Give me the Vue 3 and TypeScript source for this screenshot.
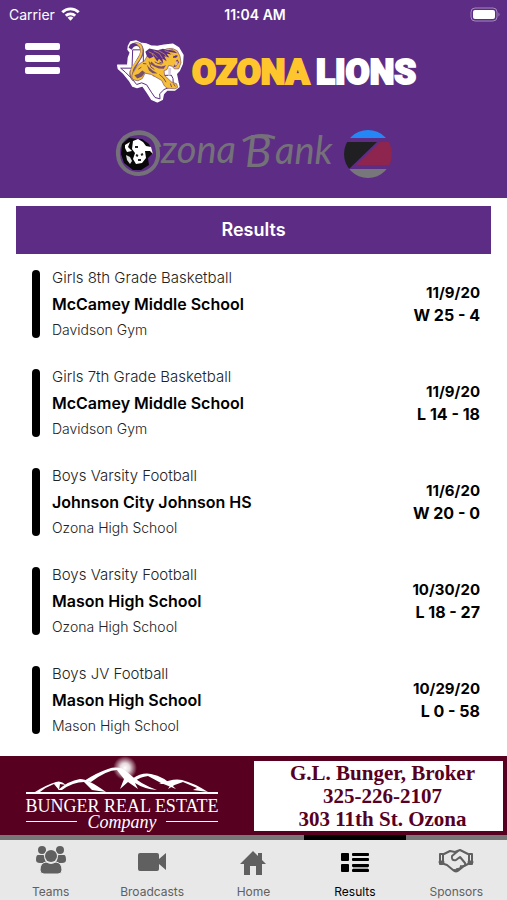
<script setup lang="ts">
interface GameResult {
  team: string
  opponent: string
  venue: string
  date: string
  score: string
}

type TabIcon = 'teams' | 'video' | 'home' | 'list' | 'handshake'

interface Tab {
  label: string
  icon: TabIcon
  active?: boolean
}

const results: GameResult[] = [
  { team: 'Girls 8th Grade Basketball', opponent: 'McCamey Middle School', venue: 'Davidson Gym', date: '11/9/20', score: 'W 25 - 4' },
  { team: 'Girls 7th Grade Basketball', opponent: 'McCamey Middle School', venue: 'Davidson Gym', date: '11/9/20', score: 'L 14 - 18' },
  { team: 'Boys Varsity Football', opponent: 'Johnson City Johnson HS', venue: 'Ozona High School', date: '11/6/20', score: 'W 20 - 0' },
  { team: 'Boys Varsity Football', opponent: 'Mason High School', venue: 'Ozona High School', date: '10/30/20', score: 'L 18 - 27' },
  { team: 'Boys JV Football', opponent: 'Mason High School', venue: 'Mason High School', date: '10/29/20', score: 'L 0 - 58' },
]

const tabs: Tab[] = [
  { label: 'Teams', icon: 'teams' },
  { label: 'Broadcasts', icon: 'video' },
  { label: 'Home', icon: 'home' },
  { label: 'Results', icon: 'list', active: true },
  { label: 'Sponsors', icon: 'handshake' },
]
</script>

<template>
  <div class="app">
    <header class="top">
      <div class="status">
        <div class="carrier">
          <span>Carrier</span>
          <svg class="wifi" viewBox="0 0 20 15" aria-hidden="true">
            <g fill="none" stroke="#fff" stroke-width="3">
              <path d="M1.2 5.6a12.4 12.4 0 0 1 17.6 0" />
              <path d="M5 9.4a7 7 0 0 1 10 0" />
            </g>
            <path d="M6.900 11.500a4.300 4.300 0 0 1 6.200 0L10 14.600z" fill="#fff" />
          </svg>
        </div>
        <time class="clock">11:04 AM</time>
        <div class="power">
          <svg class="battery" viewBox="0 0 31 15" aria-hidden="true">
            <rect x="1" y="1" width="26" height="13" rx="4" fill="none" stroke="#a588bd" />
            <rect x="3" y="3" width="22" height="9" rx="2" fill="#fff" />
            <path d="M28.500 5.500q2 2 0 4z" fill="#a588bd" />
          </svg>
        </div>
      </div>

      <div class="brand-row">
        <button class="menu" type="button" aria-label="Menu">
          <span></span><span></span><span></span>
        </button>
        <div class="brand">
          <svg class="lion" viewBox="6 10 216 194" aria-hidden="true">
            <path d="M43 31L50 18L66 15L80 22L96 24L110 30L130 32L150 28L176 25L194 36L207 58L205 84L196 104L187 114L192 140L195 153L182 163L160 162L148 175L145 191L130 198L113 191L101 172L86 150L69 155L56 151L46 134L29 113L13 99L11 88L41 88L43 66L49 50L42 41Z" fill="#fff" stroke="#fff" stroke-width="4" stroke-linejoin="round" />
            <path d="M56 42H88V90H118V120L172 118L177 128L178 150L150 161L137 174L138 189L123 185L112 169L98 147L83 141L68 146L54 129L34 109L20 97H54Z" fill="#fff" stroke="#5c2d87" stroke-width="3" stroke-linejoin="round" />
            <path d="M53 31Q64 20 77 28Q89 40 81 59L64 88L52 108Q49 120 60 132" fill="none" stroke="#7d5a79" stroke-width="11" />
            <path d="M62 25Q77 21 82 36Q85 53 74 70L57 94Q47 111 58 130" fill="none" stroke="#f5bf38" stroke-width="6" />
            <path d="M44 36Q48 20 65 23L73 28L60 31L53 42Z" fill="#5c2d87" />
            <path d="M62 103Q72 82 91 76L98 63L109 47Q124 42 137 49L158 39Q176 33 190 45L198 61L201 81L194 99L181 99L174 91L164 89L159 101L150 105L152 119L172 138L188 144L191 155L183 159L159 157L151 150L143 134L126 124L112 116L93 112L85 128L72 135L58 132Q47 121 62 103Z" fill="#f6bd36" stroke="#795070" stroke-width="2" stroke-linejoin="round" />
            <path d="M94 48L106 38L130 43L147 39L162 43L175 40L190 52L177 50L164 48L172 56L158 54L166 65L151 61L158 76L145 68L148 83L135 69L130 77L119 62L107 68L99 62Z" fill="#5c2d87" />
            <path d="M104 48L120 55L130 66M119 45L136 53L145 67M133 44L152 55L161 68M152 44L167 50L180 59M114 54L123 69M163 40L181 45" fill="none" stroke="#d9a246" stroke-width="2" />
            <path d="M177 62L186 58L192 60L186 66L177 66ZM190 71L195 79L187 91L178 94L181 87L188 83L185 76Z" fill="#5c2d87" />
            <path d="M184 76L192 77L190 88L182 90Z" fill="#e0b8ae" />
            <path d="M112 77L124 88L142 92L156 88L149 99L134 98L120 92L108 84Z" fill="#5c2d87" opacity=".8" />
            <path d="M98 86L105 104L116 112L131 113L116 104L105 94ZM61 118L74 114L85 104L93 110L84 122L70 128Z" fill="#77506c" />
            <path d="M122 78L132 83L143 85M136 79L146 82M73 100L82 94M105 77L111 94L121 101M136 116L148 126L156 139M169 143L173 154M178 143L184 152M87 83L97 84" fill="none" stroke="#77506c" stroke-width="3" />
            <path d="M163 94L172 97L170 117L163 121Z" fill="#d6cbe0" />
          </svg>
          <svg class="wordmark" viewBox="0 0 240 48" role="img" aria-label="Ozona Lions">
            <text x="4" y="36" fill="#ffc52c" stroke="#ffc52c">OZONA</text>
            <text x="128" y="36" fill="#fff" stroke="#fff">LIONS</text>
          </svg>
        </div>
      </div>

      <a class="bank" href="#" aria-label="Ozona Bank">
        <svg viewBox="0 0 278 60" aria-hidden="true">
          <path d="M24 9C8 9 2 21 3 31C4 43 13 50 24 50C37 49 44 39 43 28C42 16 36 9 24 9" fill="none" stroke="#747278" stroke-width="4" />
          <path d="M15 10C27 4 41 11 45 23" fill="none" stroke="#747278" stroke-width="3" />
          <path d="M7 20L14 14L27 15L34 20L38 29L33 34L34 41L26 46L18 46L9 39L6 30Z" fill="#080808" />
          <path d="M18 17L23 15L28 18L31 22L36 23L38 30L35 27L30 27L31 34L27 39L21 40L18 35L20 29L17 25Z" fill="#fff" />
          <path d="M10 21L15 18L13 23L17 27L12 28L10 24Z" fill="#fff" />
          <path d="M11 31L15 33L17 37L15 40L12 36Z" fill="#ddd" />
          <path d="M20 23h3M21 31l2 1M26 31l2-1M23 36h3" stroke="#222" stroke-width="2" />
          <text x="46" y="39" class="bank-name">zona</text>
          <text x="130" y="43" class="bank-name bank-cap">B</text>
          <text x="160" y="40" class="bank-name">ank</text>
          <path d="M128 17Q142 8 160 14" fill="none" stroke="#747278" stroke-width="3" />
          <clipPath id="bank-seal"><circle cx="253" cy="30" r="24" /></clipPath>
          <g clip-path="url(#bank-seal)">
            <path d="M228 6h50v8h-50z" fill="#2586f5" />
            <path d="M228 18h34l-28 27h-6z" fill="#202023" />
            <path d="M265 18h13v23h-37z" fill="#8d254f" />
            <path d="M228 45h50v10h-50z" fill="#77777b" />
          </g>
        </svg>
      </a>
    </header>

    <main class="content">
      <h1 class="title">Results</h1>
      <ul class="results">
        <li v-for="(game, i) in results" :key="i" class="result">
          <span class="bar"></span>
          <div class="details">
            <p class="team">{{ game.team }}</p>
            <p class="opponent">{{ game.opponent }}</p>
            <p class="venue">{{ game.venue }}</p>
          </div>
          <div class="outcome">
            <p>{{ game.date }}</p>
            <p class="score">{{ game.score }}</p>
          </div>
        </li>
      </ul>
    </main>

    <footer>
      <a class="ad" href="#">
        <svg class="realty" viewBox="0 0 253 79" role="img" aria-label="Bunger Real Estate Company">
          <defs>
            <radialGradient id="sun-glow">
              <stop offset="0" stop-color="#fff" />
              <stop offset="0.4" stop-color="#fff" stop-opacity="0.85" />
              <stop offset="1" stop-color="#fff" stop-opacity="0" />
            </radialGradient>
          </defs>
          <circle cx="125" cy="12" r="12" fill="url(#sun-glow)" />
          <g fill="#fff">
            <path d="M35 36Q46 29 56 26Q61 24 66 29L60 28L59 34L54 28Q46 31 40 36Z" />
            <path d="M58 34Q68 25 80 23Q88 23 106 36L92 34L84 26Q73 26 62 34Z" />
            <path d="M84 25Q96 17 108 13Q119 9 127 16Q140 28 157 34Q144 33 135 27L138 33L128 26L120 33L124 23L117 14Q107 14 91 26Z" />
            <path d="M132 23Q142 16 151 18Q164 20 176 33L161 27L148 20Q140 21 135 25Z" />
            <path d="M159 28Q173 22 182 24Q194 27 208 36L193 34L197 32L183 26Q175 28 168 33L171 28Z" />
            <path d="M26 36h192v2h-192z" />
            <path d="M26 65h51v1h-51zM166 65h52v1h-52z" />
          </g>
          <text x="122" y="56" text-anchor="middle" class="realty-name">BUNGER REAL ESTATE</text>
          <text x="122" y="72" text-anchor="middle" class="realty-sub">Company</text>
        </svg>
        <span class="contact">
          <span>G.L. Bunger, Broker</span>
          <span>325-226-2107</span>
          <span>303 11th St. Ozona</span>
        </span>
      </a>

      <nav class="tabs">
        <a v-for="tab in tabs" :key="tab.label" href="#" class="tab" :class="{ active: tab.active }" :aria-current="tab.active ? 'page' : undefined">
          <svg v-if="tab.icon === 'teams'" class="icon" viewBox="0 0 36 30" fill="currentColor" aria-hidden="true">
            <circle cx="9" cy="5" r="4" />
            <circle cx="27" cy="5" r="4" />
            <path d="M5 10h5q2 0 2 2-1 3 2 6H7q-4 0-4-3 0-5 2-5zM31 10h-5q-2 0-2 2 1 3-2 6h7q4 0 4-3 0-5-2-5z" />
            <circle cx="18" cy="11" r="7" fill="#e8e8e8" />
            <circle cx="18" cy="11" r="6" />
            <path d="M13 17q5 3 10 0 6 1 6 8 0 4-4 4H11q-4 0-4-4 0-7 6-8z" stroke="#e8e8e8" />
          </svg>
          <svg v-else-if="tab.icon === 'video'" class="icon" viewBox="0 0 36 30" fill="currentColor" aria-hidden="true">
            <path d="M6 8h17q2 0 2 2v4l7-6v17l-7-6v5q0 2-2 2H6q-2 0-2-2V10q0-2 2-2z" />
          </svg>
          <svg v-else-if="tab.icon === 'home'" class="icon" viewBox="0 0 36 30" fill="currentColor" aria-hidden="true">
            <path d="M18 6l5 5V8h4v7l4 4h-4v11h-6v-9h-6v9H9V19H5z" />
          </svg>
          <svg v-else-if="tab.icon === 'list'" class="icon" viewBox="0 0 36 30" fill="currentColor" aria-hidden="true">
            <rect x="4" y="8" width="8" height="8" rx="1" />
            <rect x="4" y="19" width="8" height="8" rx="1" />
            <rect x="15" y="8" width="17" height="3" rx="1" />
            <rect x="15" y="13" width="17" height="3" rx="1" />
            <rect x="15" y="19" width="17" height="3" rx="1" />
            <rect x="15" y="24" width="17" height="3" rx="1" />
            <path d="M16 22h15v2h-15z" fill="#a8a8a8" />
          </svg>
          <svg v-else class="icon" viewBox="0 0 36 30" fill="none" stroke="currentColor" stroke-width="2" stroke-linejoin="round" stroke-linecap="round" aria-hidden="true">
            <path d="M6 9L12 6L17 7L22 5L30 9M6 19L9 20L15 25Q18 28 21 25L26 21L30 19" />
            <path d="M20 6L14 11Q13 16 18 15L22 12L27 18Q28 21 25 21M23 21Q23 24 20 24M19 24Q18 26 16 25" />
            <path d="M2 9h3v10H2zM31 9h3v10h-3z" />
            <path d="M2 17h3M31 17h3" stroke-width="3" />
          </svg>
          <span>{{ tab.label }}</span>
        </a>
      </nav>
    </footer>
  </div>
</template>

<style>
body {
  margin: 0;
  background: #fff;
}
</style>

<style scoped>
.app {
  display: flex;
  flex-direction: column;
  min-height: 100vh;
  font-family: Inter, "Liberation Sans", sans-serif;
  color: #000;
}

p,
h1,
ul {
  margin: 0;
  padding: 0;
}

a {
  color: inherit;
  text-decoration: none;
}

.top {
  display: flex;
  flex-direction: column;
  height: 198px;
  background: #5d2d86;
  color: #fff;
}

.status {
  display: grid;
  grid-template-columns: 1fr auto 1fr;
  align-items: center;
  height: 28px;
  padding: 0 6px 0 9px;
  font-size: 14px;
}

.carrier {
  display: flex;
  align-items: center;
  gap: 6px;
}

.wifi {
  width: 19px;
  height: 14px;
}

.clock {
  font-weight: 600;
}

.power {
  display: flex;
  justify-content: flex-end;
}

.battery {
  width: 31px;
  height: 15px;
}

.brand-row {
  display: grid;
  grid-template-columns: 78px 1fr 78px;
  align-items: start;
  height: 96px;
}

.menu {
  display: flex;
  flex-direction: column;
  gap: 5px;
  width: 35px;
  margin: 15px 0 0 25px;
  padding: 0;
  border: 0;
  background: none;
  cursor: pointer;
}

.menu span {
  height: 7px;
  border-radius: 2px;
  background: #fff;
}

.brand {
  display: flex;
  justify-content: center;
  align-items: center;
  padding: 11px 0 0 36px;
}

.lion {
  width: 72px;
  height: 65px;
  flex: none;
}

.wordmark {
  width: 240px;
  height: 48px;
  flex: none;
}

.wordmark text {
  font: 900 35px Roboto, "Liberation Sans", sans-serif;
  stroke-width: 2px;
}

.bank {
  align-self: center;
  width: 278px;
  height: 60px;
}

.bank svg {
  display: block;
  width: 100%;
  height: 100%;
}

.bank-name {
  font: italic 400 38px Lato, "Liberation Serif", serif;
  fill: #747278;
}

.bank-cap {
  font-size: 44px;
}

.content {
  flex: 1;
  padding: 8px 16px 17px;
}

.title {
  background: #5d2d86;
  color: #fff;
  font-size: 18px;
  font-weight: 600;
  line-height: 48px;
  text-align: center;
}

.results {
  display: flex;
  flex-direction: column;
  gap: 21px;
  padding: 11px 11px 0 16px;
  list-style: none;
}

.result {
  display: flex;
  align-items: center;
  gap: 12px;
}

.bar {
  width: 8px;
  height: 68px;
  border-radius: 4px;
  background: #000;
}

.details {
  flex: 1;
  line-height: 26px;
}

.team {
  color: #222;
  font-size: 15px;
  font-weight: 300;
}

.opponent {
  font-size: 16px;
  font-weight: 600;
}

.venue {
  color: #222;
  font-size: 14px;
  font-weight: 300;
}

.outcome {
  font-size: 15px;
  font-weight: 700;
  line-height: 22px;
  text-align: right;
}

.score {
  font-size: 16px;
}

.ad {
  display: grid;
  grid-template-columns: 253px 1fr;
  align-items: center;
  height: 79px;
  background: #57001f;
}

.realty {
  width: 253px;
  height: 79px;
}

.realty-name {
  font: 400 18px "Liberation Serif", serif;
  fill: #fff;
}

.realty-sub {
  font: italic 400 18px "Liberation Serif", serif;
  fill: #fff;
}

.contact {
  display: flex;
  flex-direction: column;
  margin: 0 4px 0 1px;
  padding: 1px 4px 0 12px;
  background: #fff;
  color: #57001f;
  font: 700 21px/23px "Liberation Serif", serif;
  text-align: center;
}

.tabs {
  display: grid;
  grid-template-columns: repeat(5, 1fr);
  background: #e8e8e8;
}

.tab {
  display: flex;
  flex-direction: column;
  align-items: center;
  height: 60px;
  border-top: 5px solid #777;
  color: #606060;
  font-size: 12px;
}

.tab.active {
  border-top-color: #000;
  color: #000;
}

.tab span {
  margin-top: 9px;
  line-height: 16px;
}

.icon {
  width: 36px;
  height: 30px;
  margin-top: 5px;
}
</style>
